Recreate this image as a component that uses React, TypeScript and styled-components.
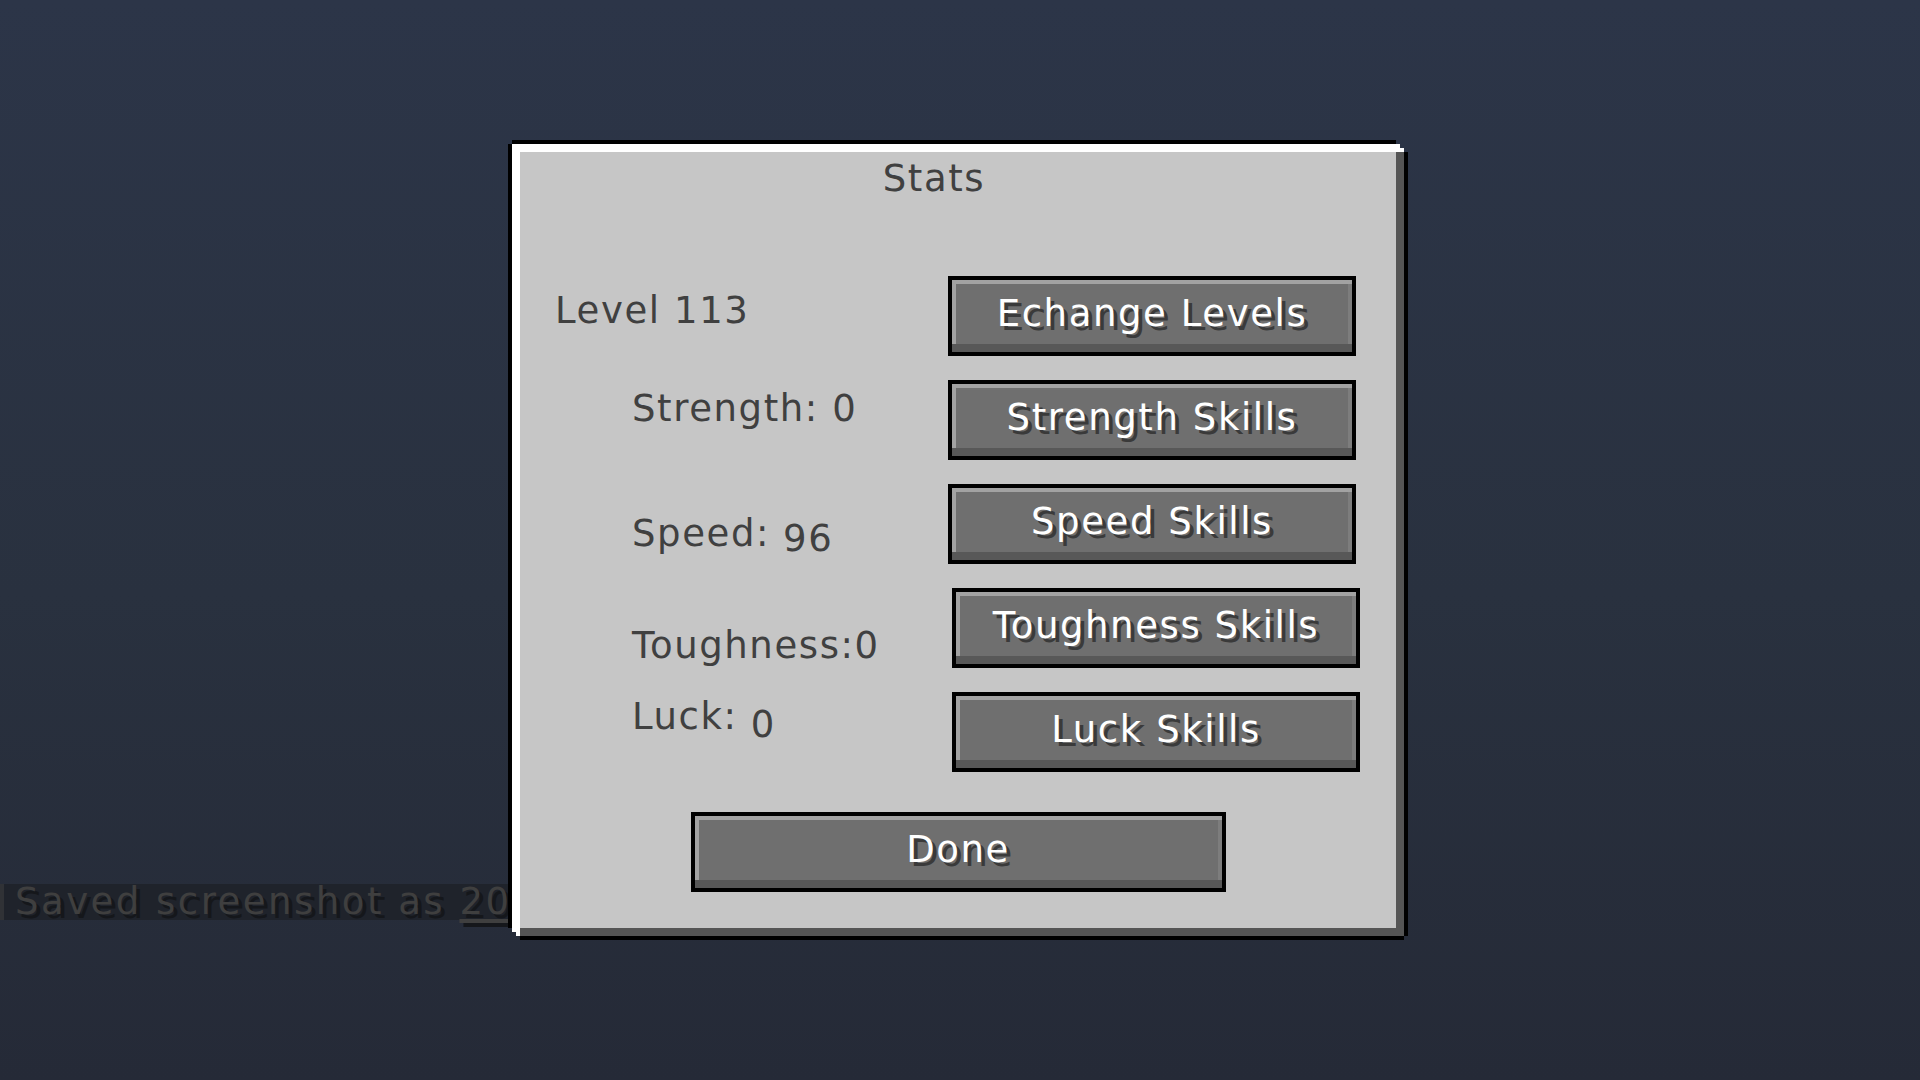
import React from 'react';
import styled, { createGlobalStyle } from 'styled-components';

const GlobalStyle = createGlobalStyle`
  html, body {
    margin: 0;
    padding: 0;
    height: 100%;
    overflow: hidden;
  }

  #root {
    height: 100%;
  }
`;

const Screen = styled.div`
  position: relative;
  width: 100vw;
  height: 100vh;
  display: flex;
  align-items: center;
  justify-content: center;
  overflow: hidden;
  background: linear-gradient(180deg, #2c3548 0%, #29313f 55%, #252a37 100%);
  font-family: "DejaVu Sans", "Liberation Sans", sans-serif;
  letter-spacing: 1.6px;
`;

const ChatLine = styled.div`
  position: absolute;
  left: 0;
  top: 884px;
  width: 640px;
  height: 36px;
  box-sizing: border-box;
  padding-left: 11px;
  border-left: 4px solid #303236;
  background: #1f232b;
  color: #3f3f3f;
  font-size: 37px;
  line-height: 36px;
  letter-spacing: 2.5px;
  white-space: nowrap;
  text-shadow: 4px 4px 0 #15171b;
`;

const Link = styled.span`
  text-decoration: underline;
  text-decoration-thickness: 4px;
  text-underline-offset: 5px;
`;

const Panel = styled.div`
  position: relative;
  z-index: 1;
  width: 900px;
  box-sizing: border-box;
  margin-right: 4px;
  padding: 13px 8px 44px;
  background: #c6c6c6;
  border: 4px solid #000;
  box-shadow: inset 8px 8px 0 #fff, inset -8px -8px 0 #555;
  clip-path: polygon(
    0 4px, 4px 4px, 4px 0,
    calc(100% - 12px) 0, calc(100% - 12px) 4px, calc(100% - 8px) 4px,
    calc(100% - 8px) 8px, calc(100% - 4px) 8px, calc(100% - 4px) 12px, 100% 12px,
    100% calc(100% - 4px), calc(100% - 4px) calc(100% - 4px), calc(100% - 4px) 100%,
    12px 100%, 12px calc(100% - 4px), 8px calc(100% - 4px),
    8px calc(100% - 8px), 4px calc(100% - 8px), 4px calc(100% - 12px), 0 calc(100% - 12px)
  );
`;

const Title = styled.h1`
  margin: 0;
  padding-right: 48px;
  font-size: 37px;
  font-weight: normal;
  line-height: 44px;
  color: #404040;
  text-align: center;
`;

const Rows = styled.div`
  display: flex;
  flex-direction: column;
  gap: 24px;
  margin-top: 75px;
`;

const Row = styled.div`
  display: grid;
  grid-template-columns: 428px 408px;
  height: 80px;
`;

const Label = styled.div<{ $indent: number; $drop: number }>`
  display: flex;
  align-items: flex-start;
  gap: 13px;
  padding-left: ${(p) => p.$indent}px;
  padding-top: ${(p) => p.$drop}px;
  color: #404040;
  font-size: 37px;
  line-height: 44px;
  white-space: nowrap;
`;

const Value = styled.span<{ $drop: number }>`
  margin-top: ${(p) => p.$drop}px;
`;

const Button = styled.button<{ $shift?: number; $width?: number }>`
  width: ${(p) => p.$width ?? 408}px;
  height: 80px;
  margin: 0 0 0 ${(p) => p.$shift ?? 0}px;
  padding: 0 0 4px;
  box-sizing: border-box;
  border: 4px solid #000;
  background: #6f6f6f;
  box-shadow: inset 0 -8px 0 #585858, inset 4px 4px 0 #a2a2a2, inset -4px 0 0 #7d7d7d;
  color: #fff;
  font-family: inherit;
  font-size: 37px;
  line-height: 44px;
  letter-spacing: 1.6px;
  text-shadow: 4px 4px 0 #3a3a3a;
  white-space: nowrap;
  cursor: pointer;
`;

const Footer = styled.div`
  display: flex;
  justify-content: center;
  margin-top: 40px;
`;

interface Stat {
  label: string;
  value?: string;
  valueDrop?: number;
  indent: number;
  drop: number;
  button: string;
  shift?: number;
}

const stats: Stat[] = [
  { label: 'Level 113', indent: 35, drop: 13, button: 'Echange Levels' },
  { label: 'Strength: 0', indent: 112, drop: 7, button: 'Strength Skills' },
  { label: 'Speed:', value: '96', valueDrop: 5, indent: 112, drop: 28, button: 'Speed Skills' },
  { label: 'Toughness:0', indent: 112, drop: 36, button: 'Toughness Skills', shift: 4 },
  { label: 'Luck:', value: '0', valueDrop: 8, indent: 112, drop: 3, button: 'Luck Skills', shift: 4 },
];

const App: React.FC = () => {
  return (
    <Screen>
      <GlobalStyle />
      <ChatLine>
        Saved screenshot as <Link>2024-05-11_18.42.07.png</Link>
      </ChatLine>
      <Panel>
        <Title>Stats</Title>
        <Rows>
          {stats.map((s) => (
            <Row key={s.button}>
              <Label $indent={s.indent} $drop={s.drop}>
                <span>{s.label}</span>
                {s.value && <Value $drop={s.valueDrop ?? 0}>{s.value}</Value>}
              </Label>
              <Button $shift={s.shift}>{s.button}</Button>
            </Row>
          ))}
        </Rows>
        <Footer>
          <Button $width={535}>Done</Button>
        </Footer>
      </Panel>
    </Screen>
  );
};

export default App;
